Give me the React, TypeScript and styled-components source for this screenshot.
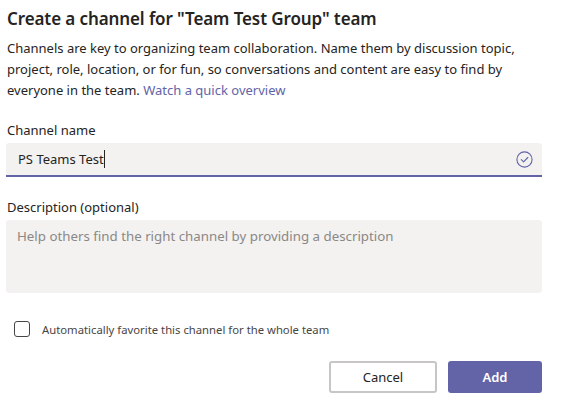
import styled, { createGlobalStyle } from 'styled-components'

// global
const GlobalStyle = createGlobalStyle`
  html, body {
    margin: 0;
    padding: 0;
    background: #ffffff;
  }
  body {
    font-family: 'Segoe UI', 'Noto Sans', 'Open Sans', sans-serif;
    color: #252423;
  }
`

// styled
const Dialog = styled.div`
  width: 536px;
  padding: 7px 0 0 6px;
  display: flex;
  flex-direction: column;
`

const Title = styled.h1`
  margin: 0 0 0 1px;
  font-size: 17px;
  line-height: 24px;
  font-weight: 600;
  letter-spacing: -0.1px;
  color: #252423;
`

const Intro = styled.p`
  margin: 7px 0 0 1px;
  font-size: 13px;
  line-height: 21px;
  color: #252423;

  a {
    color: #6264a7;
    text-decoration: none;
  }
`

const Label = styled.label<{ $gap: number }>`
  display: block;
  margin-top: ${(props) => props.$gap}px;
  margin-left: 1px;
  font-size: 13px;
  line-height: 20px;
  color: #252423;
`

const InputBox = styled.div`
  margin-top: 3px;
  height: 34px;
  box-sizing: border-box;
  background: #f3f2f1;
  border-radius: 3px 3px 0 0;
  border-bottom: 2px solid #6264a7;
  padding: 0 9px 0 12px;
  display: flex;
  align-items: center;
  font-size: 13px;
`

const Value = styled.span`
  flex: 1;
  display: flex;
  align-items: center;
`

const Caret = styled.span`
  display: inline-block;
  width: 1px;
  height: 18px;
  background: #252423;
`

const TextArea = styled.div`
  margin-top: 3px;
  height: 73px;
  box-sizing: border-box;
  background: #f3f2f1;
  border-radius: 3px;
  padding: 6px 11px;
  font-size: 13.3px;
  line-height: 20px;
  color: #8a8886;
`

const CheckRow = styled.div`
  margin-top: 28px;
  padding-left: 8px;
  display: flex;
  align-items: center;
  gap: 12px;
  font-size: 11.3px;
  color: #484644;
`

const CheckBox = styled.span`
  width: 16px;
  height: 16px;
  box-sizing: border-box;
  border: 1px solid #484644;
  border-radius: 3px;
`

const Footer = styled.div`
  margin-top: 24px;
  display: flex;
  justify-content: flex-end;
  gap: 11px;
`

const Button = styled.button<{ $primary?: boolean; $width: number }>`
  width: ${(props) => props.$width}px;
  height: 32px;
  box-sizing: border-box;
  border-radius: 3px;
  font-family: inherit;
  font-size: 13px;
  font-weight: ${(props) => (props.$primary ? 600 : 400)};
  color: ${(props) => (props.$primary ? '#ffffff' : '#252423')};
  background: ${(props) => (props.$primary ? '#6264a7' : '#ffffff')};
  border: ${(props) => (props.$primary ? 'none' : '2px solid #c8c6c4')};
  cursor: pointer;
`

const CheckCircle = () => (
  <svg width='17' height='17' viewBox='0 0 17 17' fill='none'>
    <circle cx='8.5' cy='8.5' r='7.6' stroke='#6264a7' strokeWidth='1.1' />
    <path
      d='M5.3 8.7 L7.6 10.9 L11.8 6.5'
      stroke='#6264a7'
      strokeWidth='1.1'
      strokeLinecap='round'
      strokeLinejoin='round'
    />
  </svg>
)

// component
const App = () => {
  return (
    <>
      <GlobalStyle />
      <Dialog>
        <Title>Create a channel for "Team Test Group" team</Title>
        <Intro>
          Channels are key to organizing team collaboration. Name them by
          discussion topic, project, role, location, or for fun, so
          conversations and content are easy to find by everyone in the team.{' '}
          <a href='#'>Watch a quick overview</a>
        </Intro>

        <Label $gap={19}>Channel name</Label>
        <InputBox>
          <Value>
            PS Teams Test
            <Caret />
          </Value>
          <CheckCircle />
        </InputBox>

        <Label $gap={20}>Description (optional)</Label>
        <TextArea>
          Help others find the right channel by providing a description
        </TextArea>

        <CheckRow>
          <CheckBox />
          Automatically favorite this channel for the whole team
        </CheckRow>

        <Footer>
          <Button type='button' $width={108}>
            Cancel
          </Button>
          <Button type='button' $primary $width={94}>
            Add
          </Button>
        </Footer>
      </Dialog>
    </>
  )
}

export default App
